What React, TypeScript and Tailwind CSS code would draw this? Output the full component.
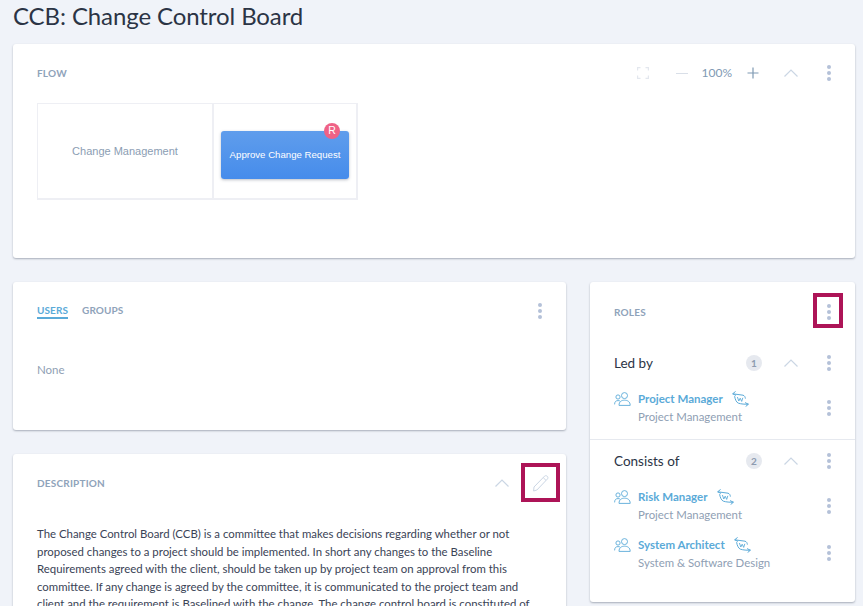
import React, { FC, ReactNode } from 'react'

const font = { fontFamily: '"Lato", "Noto Sans", sans-serif' }

const Kebab: FC<{ className?: string }> = ({ className = '' }) => (
  <div className={`flex flex-col gap-[2px] w-[4px] ${className}`}>
    <span className="h-[4px] w-[4px] rounded-full bg-[#b4c1d8]" />
    <span className="h-[4px] w-[4px] rounded-full bg-[#b4c1d8]" />
    <span className="h-[4px] w-[4px] rounded-full bg-[#b4c1d8]" />
  </div>
)

const Chevron: FC = () => (
  <svg width="14" height="8" viewBox="0 0 14 8" fill="none" stroke="#cbd6e4" strokeWidth="1.2">
    <path d="M0.5 7.5 L7 1 L13.5 7.5" />
  </svg>
)

const PeopleIcon: FC = () => (
  <svg width="17" height="14" viewBox="0 0 17 14" fill="none" stroke="#5aaad8" strokeWidth="0.9">
    <circle cx="10.5" cy="3.6" r="3" />
    <path d="M5 13.4 C5 9.6 7.5 8.2 10.5 8.2 C13.5 8.2 16.2 9.6 16.2 13.4 Z" />
    <circle cx="4" cy="5" r="2.1" />
    <path d="M0.6 12.4 C0.6 9.6 2 8.6 4 8.6 C4.7 8.6 5.3 8.7 5.9 9" />
  </svg>
)

const SwapIcon: FC = () => (
  <svg width="17" height="16" viewBox="0 0 17 16" fill="none" stroke="#5aaad8" strokeWidth="1">
    <path d="M3.6 0.4 L0.7 2.8 L4 4.4 M0.7 2.8 C4 3.4 8 3.6 11 4.2 C12.6 4.6 13.2 6 13.4 7.6" />
    <path d="M13.6 15.6 L16.4 13.2 L13 11.6 M16.4 13.2 C13 13.4 9 13 6.4 12.2 C4.4 11.4 3.2 8.6 2.6 5.2" />
    <path d="M5.4 6 L6.8 10 L8.2 7.2 L9.7 10.4 L10.8 6.8" strokeWidth="0.9" />
  </svg>
)

const Card: FC<{ className?: string; children: ReactNode }> = ({ className = '', children }) => (
  <div className={`bg-white rounded-[3px] shadow-[0_1px_2px_rgba(60,70,90,0.4)] ${className}`}>{children}</div>
)

const Label: FC<{ children: ReactNode }> = ({ children }) => (
  <span className="block text-[10px] font-bold tracking-[0.2px] leading-[14px] text-[#8fa3ba]">{children}</span>
)

const Highlight: FC<{ className: string }> = ({ className }) => (
  <div className={`absolute border-[4px] border-[#ad1457] ${className}`} />
)

const RoleRow: FC<{ name: string; team: string; className?: string; kebabClass?: string }> = ({ name, team, className = '', kebabClass = '' }) => (
  <div className={`flex items-start pl-[24px] pr-[24px] ${className}`}>
    <div className="w-[24px] pt-[1px] shrink-0">
      <PeopleIcon />
    </div>
    <div className="flex-1 min-w-0">
      <div className="flex items-center gap-[9px] h-[16px]">
        <span className="text-[11.5px] font-bold text-[#5aaad8] leading-[16px]">{name}</span>
        <SwapIcon />
      </div>
      <div className="text-[11.4px] text-[#8fa0b4] leading-[16px] mt-[2px]">{team}</div>
    </div>
    <Kebab className={kebabClass} />
  </div>
)

const RoleHeader: FC<{ title: string; count: number }> = ({ title, count }) => (
  <div className="flex items-center pl-[24px] pr-[24px] h-[20px]">
    <span className="flex-1 text-[13.5px] text-[#2b3445]">{title}</span>
    <span className="h-[16px] w-[16px] rounded-full bg-[#e6e9ef] text-[10px] font-bold text-[#8d9bb0] flex items-center justify-center">{count}</span>
    <div className="ml-[22px] mr-[29px]">
      <Chevron />
    </div>
    <Kebab />
  </div>
)

export default function App() {
  return (
    <div className="relative h-[606px] w-[863px] overflow-hidden bg-[#f0f3f9] px-[13px]" style={font}>
      <h1 className="h-[44px] text-[24px] tracking-[-0.1px] leading-[32px] text-[#2b3445]">CCB: Change Control Board</h1>

      <Card className="w-[842px] h-[214px] px-[24px] pt-[21px]">
        <div className="flex items-center h-[16px]">
          <div className="flex-1">
            <Label>FLOW</Label>
          </div>
          <svg width="12" height="12" viewBox="0 0 12 12" fill="none" stroke="#e3e7ee" strokeWidth="1.2" className="mr-[27px]">
            <path d="M0.6 3.5 V0.6 H3.5 M8.5 0.6 H11.4 V3.5 M11.4 8.5 V11.4 H8.5 M3.5 11.4 H0.6 V8.5" />
          </svg>
          <div className="h-[1px] w-[12px] bg-[#d9dfe8] mr-[14px]" />
          <span className="text-[12px] text-[#7f9ab3] mr-[15px]">100%</span>
          <svg width="12" height="12" viewBox="0 0 12 12" stroke="#7f9ab3" strokeWidth="1.2" className="mr-[25px]">
            <path d="M0.5 6 H11.5 M6 0.5 V11.5" />
          </svg>
          <div className="mr-[29px]">
            <Chevron />
          </div>
          <Kebab />
        </div>
        <div className="mt-[22px] flex w-[321px] h-[97px] border-2 border-t border-l border-[#eeeff4]" style={{ fontFamily: '"Liberation Sans", sans-serif' }}>
          <div className="w-[176px] border-r-2 border-[#eeeff4] flex items-center justify-center text-[11px] text-[#8b9db3]">
            Change Management
          </div>
          <div className="flex-1 flex items-center justify-center pt-[7px]">
            <div className="relative w-[128px] h-[48px] rounded-[3px] bg-gradient-to-b from-[#5f9dec] to-[#468ceb] shadow-[0_1px_3px_rgba(60,70,90,0.35)] flex items-center justify-center text-[9.65px] text-white pt-[2px]">
              Approve Change Request
              <span className="absolute right-[9px] top-[-8px] h-[16px] w-[16px] rounded-full bg-[#ef6286] flex items-center justify-center text-[10.5px]">R</span>
            </div>
          </div>
        </div>
      </Card>

      <div className="mt-[24px] flex items-start gap-[24px]">
        <div className="w-[553px] shrink-0">
          <Card className="h-[148px] px-[24px] pt-[22px]">
            <div className="flex items-start">
              <div className="flex-1 flex gap-[14px]">
                <span className="text-[10px] font-bold tracking-[0.1px] text-[#5aaad8] border-b-2 border-[#5aaad8] h-[15px] leading-[13px]">USERS</span>
                <span className="text-[10px] font-bold tracking-[0.1px] text-[#8fa3ba] leading-[13px]">GROUPS</span>
              </div>
              <Kebab className="-mt-[1px]" />
            </div>
            <div className="mt-[43px] text-[11.5px] text-[#8fa0b4] leading-[16px]">None</div>
          </Card>

          <Card className="mt-[24px] h-[220px] px-[24px] pt-[22px]">
            <div className="flex items-center h-[14px]">
              <div className="flex-1">
                <Label>DESCRIPTION</Label>
              </div>
              <div className="mr-[24px]">
                <Chevron />
              </div>
              <svg width="16" height="17" viewBox="0 0 16 17" fill="none" stroke="#cbd6e4" strokeWidth="1" className="-mr-[7px]">
                <path d="M1 12 L11.5 1.2 C12.3 0.5 13.4 0.5 14.3 1.3 C15.1 2.1 15.1 3.2 14.4 4 L3.9 15 L0.6 16 Z M10.2 2.6 L13 5.4" />
              </svg>
            </div>
            <p className="mt-[35px] whitespace-nowrap text-[11.4px] leading-[17.6px] text-[#3a4356]">
              The Change Control Board (CCB) is a committee that makes decisions regarding whether or not<br />
              proposed changes to a project should be implemented. In short any changes to the Baseline<br />
              Requirements agreed with the client, should be taken up by project team on approval from this<br />
              committee. If any change is agreed by the committee, it is communicated to the project team and<br />
              client and the requirement is Baselined with the change. The change control board is constituted of
            </p>
          </Card>
        </div>

        <Card className="w-[265px] h-[320px] shrink-0 pt-[23px]">
          <div className="flex items-center justify-between pl-[24px] pr-[24px] h-[14px]">
            <Label>ROLES</Label>
            <Kebab />
          </div>
          <div className="mt-[34px]">
            <RoleHeader title="Led by" count={1} />
          </div>
          <RoleRow name="Project Manager" team="Project Management" className="mt-[18px]" kebabClass="mt-[9px]" />
          <div className="mt-[14px] h-[1px] bg-[#e6e9ef]" />
          <div className="mt-[11px]">
            <RoleHeader title="Consists of" count={2} />
          </div>
          <RoleRow name="Risk Manager" team="Project Management" className="mt-[18px]" kebabClass="mt-[9px]" />
          <RoleRow name="System Architect" team="System & Software Design" className="mt-[14px]" kebabClass="mt-[8px]" />
        </Card>
      </div>

      <Highlight className="left-[813px] top-[293px] h-[35px] w-[30px]" />
      <Highlight className="left-[521px] top-[463px] h-[39px] w-[39px]" />
    </div>
  )
}
